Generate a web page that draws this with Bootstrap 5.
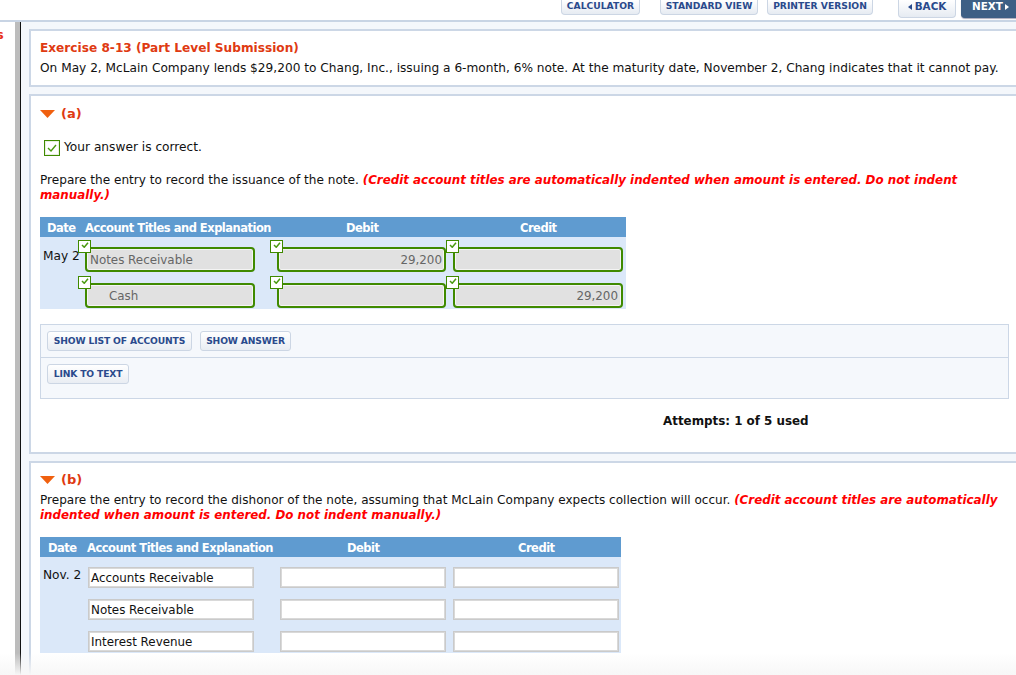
<!DOCTYPE html>
<html lang="en">
<head>
<meta charset="utf-8">
<title>Exercise 8-13</title>
<link href="https://cdn.jsdelivr.net/npm/bootstrap@5.3.0/dist/css/bootstrap.min.css" rel="stylesheet">
<style>
html,body{height:675px;overflow:hidden;margin:0;background:#fff}
body{font-family:"DejaVu Sans",Verdana,sans-serif;font-size:12.2px;line-height:15px;color:#111;width:1016px;position:relative}
.topbar{height:22px;border-bottom:2px solid #c8d4e4;background:#fff;padding-left:561px}
.tbtn{height:15px;border:1px solid #ccd6e4;border-top:0;border-radius:0 0 4px 4px;background:linear-gradient(#fff,#e6ebf2);color:#2a4a8c;font-size:9.2px;font-weight:700;line-height:11px;text-align:center;flex:none;white-space:nowrap}
.w1{width:79px;margin-right:20px}.w2{width:98px;margin-right:9px}.w3{width:106px;margin-right:13px}
.tsep{width:1px;height:20px;background:#c8d4e4;margin-right:12px}
.w4{width:58px;height:18px;margin-right:5px;font-size:10.4px;line-height:13px}
.w5{width:70px;height:18px;background:#3d5f85;border-color:#3d5f85;color:#fff;font-size:10.4px;line-height:13px;text-align:left;padding-left:10px;box-shadow:0 1px 1px #aab}
.tri-l,.tri-r{display:inline-block;border:3px solid transparent;border-left:0;border-right:4px solid #2a4a8c;margin-right:3px;vertical-align:0}
.tri-r{border-right:0;border-left:4px solid #fff;margin:0 0 0 2px}
.mainrow{height:653px}
.sidecol{width:15px;color:#e8331a;font-weight:700;font-size:13px;padding-top:5px;text-indent:-4px;overflow:hidden}
.graybar{width:5px;background:#bcbcbc}
.blackbar{width:1px;background:#111}
.workarea{flex:1;background:#f4f7fb;padding:7px 0 0 8px;min-width:0}
.panel-box{background:#fff;border:2px solid #ccd7e6;border-right:0;padding-left:9px;margin-bottom:7px}
.p1{height:58px;padding-top:10px;font-size:12.17px}
.p2{height:360px;padding-top:10px}
.p3{height:230px;padding-top:9px}
.ex-title{color:#df3a12;font-weight:700;font-size:12.15px;margin-bottom:5px}
.part{color:#df3a12;font-weight:700;font-size:13px;height:15px;display:flex;align-items:center;gap:6px}
.arrow{width:15px;height:8px;flex:none}
.okline{display:flex;align-items:center;gap:4px;margin:18px 0 0 4px;height:17px}
.okbox{width:16px;height:16px;border:1px solid #3f8a00;background:#fff;display:flex;align-items:center;justify-content:center;flex:none;box-shadow:inset 0 0 0 1px #e8f0e0}
.instr{margin:17px 0 0;width:965px;font-size:12.1px}
.instr b{color:#f00;font-style:italic;font-size:11.87px}
.jtable{background:#dbe8f9}
.ja{width:586px;height:92px;margin-top:14px}
.jb{width:581px;height:116px;margin-top:14px}
.jhead{background:#5f9bd0;color:#fff;font-weight:700;height:20px;line-height:22px;display:flex;font-size:11.5px;letter-spacing:-.5px}
.jrow{display:flex;align-items:flex-start}
.fld{position:relative;flex:none;box-sizing:border-box;font-size:11.9px}
.fld.good{height:25px;border:2px solid #3f8a00;border-radius:4px;background:#e1e1e1;box-shadow:inset 0 0 0 1px #f4f4f4;color:#666;line-height:23px;padding:0 2px 0 3px}
.fld.plain{height:21px;border:1px solid #cacaca;background:#fff;box-shadow:inset 0 0 0 1px #d9d9d9;line-height:20px;padding:0 2px;color:#111}
.mini{position:absolute;width:13px;height:13px;background:#fff;border:1px solid #3f8a00;left:-9px;top:-9px;display:flex;align-items:flex-start;justify-content:center;padding-top:1px}
.rgt{text-align:right}
.fld.good.fc.rgt{padding-right:3px}
.toolbox{width:969px;height:75px;margin-top:15px;border:1px solid #ccd7e6;background:#f5f8fc}
.toolrow{height:32px;padding:6px 0 0 6px;display:flex;gap:8px}
.toolrow+.toolrow{border-top:1px solid #ccd7e6;height:41px}
.sbtn{height:20px;border:1px solid #ccd6e4;border-radius:3px;background:linear-gradient(#fff,#e9edf3);color:#2a4a8c;font-weight:700;font-size:9.2px;line-height:18px;text-align:center;letter-spacing:-.15px;white-space:nowrap}
.attempts{font-weight:700;font-size:11.9px;margin:15px 0 0 623px}
.fadebar{position:absolute;left:0;right:0;bottom:0;height:22px;background:linear-gradient(rgba(248,248,248,0),#f7f7f7)}
.hd1a{width:45px;padding-left:7px}.hd2a{width:261px}.hd3a{width:174px}
.ra1{height:36px;padding-top:10px}.ra2{height:36px;padding-top:10px}
.dca{width:45px;padding:1px 0 0 3px;line-height:17px;flex:none}
.fa{width:170px;margin-right:22px}.fb{width:169px;margin-right:7px}.fc{width:170px}
.fld.good.ind{padding-left:22px}
.bt1{width:145px}.bt2{width:91px}.bt3{width:82px}
.instr.instb{margin-top:6px;font-size:12.05px}
.hd1b{width:47px;padding-left:8px}.hd2b{width:260px}.hd3b{width:171px}
.rb{height:32px;padding-top:10px}
.dcb{width:48px;padding-left:3px;line-height:17px;flex:none}
.ga{width:166px;margin-right:26px}.gb{width:166px;margin-right:7px}.gc{width:166px}
</style>
</head>
<body>
<div class="topbar d-flex align-items-start">
  <div class="tbtn w1">CALCULATOR</div>
  <div class="tbtn w2">STANDARD VIEW</div>
  <div class="tbtn w3">PRINTER VERSION</div>
  <div class="tsep"></div>
  <div class="tbtn w4"><span class="tri-l"></span>BACK</div>
  <div class="tbtn w5">NEXT<span class="tri-r"></span></div>
</div>
<div class="mainrow d-flex">
  <div class="sidecol">s</div>
  <div class="graybar"></div>
  <div class="blackbar"></div>
  <div class="workarea">
    <div class="panel-box p1">
      <div class="ex-title">Exercise 8-13 (Part Level Submission)</div>
      <div>On May 2, McLain Company lends $29,200 to Chang, Inc., issuing a 6-month, 6% note. At the maturity date, November 2, Chang indicates that it cannot pay.</div>
    </div>
    <div class="panel-box p2">
      <div class="part"><svg class="arrow" viewBox="0 0 15 8"><path d="M0 0H15L7.5 8Z" fill="#f0600f"/></svg>(a)</div>
      <div class="okline"><span class="okbox"><svg width="10" height="8" viewBox="0 0 10 8"><path d="M1 4l3 3 5-6" fill="none" stroke="#4a9a10" stroke-width="1.4"/></svg></span>Your answer is correct.</div>
      <p class="instr">Prepare the entry to record the issuance of the note. <b>(Credit account titles are automatically indented when amount is entered. Do not indent manually.)</b></p>
      <div class="jtable ja">
        <div class="jhead"><span class="hd1a">Date</span><span class="hd2a">Account Titles and Explanation</span><span class="hd3a">Debit</span><span>Credit</span></div>
        <div class="jrow ra1">
          <div class="dca">May 2</div>
          <div class="fld good fa"><span class="mini"><svg width="8" height="6" viewBox="0 0 10 8"><path d="M1 4l3 3 5-6" fill="none" stroke="#4a9a10" stroke-width="2"/></svg></span>Notes Receivable</div>
          <div class="fld good fb rgt"><span class="mini"><svg width="8" height="6" viewBox="0 0 10 8"><path d="M1 4l3 3 5-6" fill="none" stroke="#4a9a10" stroke-width="2"/></svg></span>29,200</div>
          <div class="fld good fc"><span class="mini"><svg width="8" height="6" viewBox="0 0 10 8"><path d="M1 4l3 3 5-6" fill="none" stroke="#4a9a10" stroke-width="2"/></svg></span></div>
        </div>
        <div class="jrow ra2">
          <div class="dca"></div>
          <div class="fld good fa ind"><span class="mini"><svg width="8" height="6" viewBox="0 0 10 8"><path d="M1 4l3 3 5-6" fill="none" stroke="#4a9a10" stroke-width="2"/></svg></span>Cash</div>
          <div class="fld good fb"><span class="mini"><svg width="8" height="6" viewBox="0 0 10 8"><path d="M1 4l3 3 5-6" fill="none" stroke="#4a9a10" stroke-width="2"/></svg></span></div>
          <div class="fld good fc rgt"><span class="mini"><svg width="8" height="6" viewBox="0 0 10 8"><path d="M1 4l3 3 5-6" fill="none" stroke="#4a9a10" stroke-width="2"/></svg></span>29,200</div>
        </div>
      </div>
      <div class="toolbox">
        <div class="toolrow"><div class="sbtn bt1">SHOW LIST OF ACCOUNTS</div><div class="sbtn bt2">SHOW ANSWER</div></div>
        <div class="toolrow"><div class="sbtn bt3">LINK TO TEXT</div></div>
      </div>
      <div class="attempts">Attempts: 1 of 5 used</div>
    </div>
    <div class="panel-box p3">
      <div class="part"><svg class="arrow" viewBox="0 0 15 8"><path d="M0 0H15L7.5 8Z" fill="#f0600f"/></svg>(b)</div>
      <p class="instr instb">Prepare the entry to record the dishonor of the note, assuming that McLain Company expects collection will occur. <b>(Credit account titles are automatically indented when amount is entered. Do not indent manually.)</b></p>
      <div class="jtable jb">
        <div class="jhead"><span class="hd1b">Date</span><span class="hd2b">Account Titles and Explanation</span><span class="hd3b">Debit</span><span>Credit</span></div>
        <div class="jrow rb"><div class="dcb">Nov. 2</div><div class="fld plain ga">Accounts Receivable</div><div class="fld plain gb"></div><div class="fld plain gc"></div></div>
        <div class="jrow rb"><div class="dcb"></div><div class="fld plain ga">Notes Receivable</div><div class="fld plain gb"></div><div class="fld plain gc"></div></div>
        <div class="jrow rb"><div class="dcb"></div><div class="fld plain ga">Interest Revenue</div><div class="fld plain gb"></div><div class="fld plain gc"></div></div>
      </div>
    </div>
  </div>
</div>
<div class="fadebar"></div>
</body>
</html>
